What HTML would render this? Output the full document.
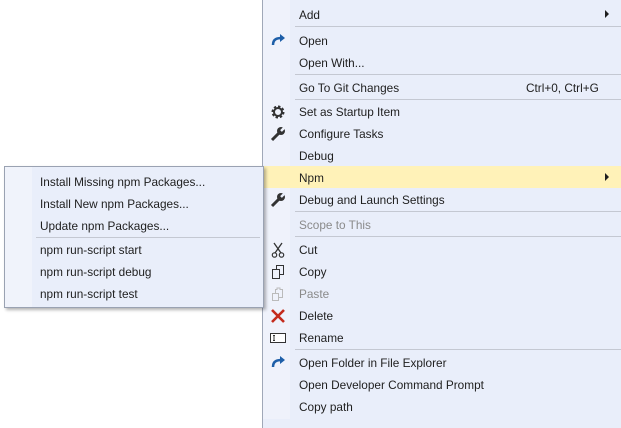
<!DOCTYPE html>
<html><head><style>
body{margin:0;width:621px;height:419px;background:#fff;position:relative;overflow:hidden;font-family:"Segoe UI","Liberation Sans",sans-serif;font-size:11.8px;color:#1e1e1e}
.m{position:absolute;left:262px;top:-2px;width:370px;height:430px;background:#e9eefa;border-left:1px solid #a0a8b8}
.g{position:absolute;left:263px;top:0;width:27px;height:419px;background:#eff2fb}
.r{position:absolute;left:299px;height:22px;line-height:22px;white-space:nowrap;margin-top:1px}
.s{position:absolute;left:295px;width:330px;height:1px;background:#c4c8d2}
.ic{position:absolute;left:270px;width:16px;height:16px;margin-top:1px}
.sub{position:absolute;left:4px;top:166px;width:258px;height:140px;background:#e9eefa;border:1px solid #9aa2b2;box-shadow:2px 2px 3px rgba(0,0,0,.3)}
.sg{position:absolute;left:0;top:0;width:27px;height:140px;background:#f0f3fb}
.sr{position:absolute;left:35px;height:22px;line-height:22px;white-space:nowrap}
.dis{color:#8a8a8a}
</style></head><body>
<div class="m"></div><div class="g"></div>
<div class="r" style="top:3px">Add</div>
<div style="position:absolute;left:605px;top:10px;width:0;height:0;border-left:4px solid #1e1e1e;border-top:4px solid transparent;border-bottom:4px solid transparent"></div>
<div class="s" style="top:26px"></div>
<svg class="ic" style="top:32px" viewBox="0 0 16 16"><path d="M3 12 C3 6 7 5 12 5" stroke="#1e5fa8" stroke-width="2.5" fill="none"/><path d="M10 1 L15 5 L10 9Z" fill="#1e5fa8"/></svg>
<div class="r" style="top:29px">Open</div>
<div class="r" style="top:51px">Open With...</div>
<div class="s" style="top:74px"></div>
<div class="r" style="top:76px">Go To Git Changes</div>
<div class="r" style="top:76px;left:526px">Ctrl+0, Ctrl+G</div>
<div class="s" style="top:99px"></div>
<svg class="ic" style="top:103px" viewBox="0 0 16 16"><circle cx="8" cy="8" r="5" fill="none" stroke="#333" stroke-width="3" stroke-dasharray="2.2 1.7"/><circle cx="8" cy="8" r="4" fill="none" stroke="#333" stroke-width="2"/></svg>
<div class="r" style="top:100px">Set as Startup Item</div>
<svg class="ic" style="top:125px" viewBox="0 0 16 16"><path d="M2 14 L9 7" stroke="#333" stroke-width="3"/><circle cx="11" cy="5" r="4" fill="#333"/><path d="M11 5 L15 1" stroke="#eff2fb" stroke-width="2.5"/></svg>
<div class="r" style="top:122px">Configure Tasks</div>
<div class="r" style="top:144px">Debug</div>
<div style="position:absolute;left:263px;top:166px;width:360px;height:22px;background:#fff2b8"></div>
<div class="r" style="top:166px">Npm</div>
<div style="position:absolute;left:605px;top:173px;width:0;height:0;border-left:4px solid #1e1e1e;border-top:4px solid transparent;border-bottom:4px solid transparent"></div>
<svg class="ic" style="top:191px" viewBox="0 0 16 16"><path d="M2 14 L9 7" stroke="#333" stroke-width="3"/><circle cx="11" cy="5" r="4" fill="#333"/><path d="M11 5 L15 1" stroke="#e9eefa" stroke-width="2.5"/></svg>
<div class="r" style="top:188px">Debug and Launch Settings</div>
<div class="s" style="top:211px"></div>
<div class="r dis" style="top:213px">Scope to This</div>
<div class="s" style="top:236px"></div>
<svg class="ic" style="top:241px" viewBox="0 0 16 16"><path d="M4 1 L11 11 M12 1 L5 11" stroke="#333" stroke-width="1.3"/><circle cx="4.5" cy="13" r="2.2" fill="none" stroke="#333" stroke-width="1.2"/><circle cx="11.5" cy="13" r="2.2" fill="none" stroke="#333" stroke-width="1.2"/></svg>
<div class="r" style="top:238px">Cut</div>
<svg class="ic" style="top:263px" viewBox="0 0 16 16"><rect x="2.5" y="5.5" width="7" height="9" fill="none" stroke="#333"/><path d="M6.5 5.5 V1.5 H13.5 V10.5 H9.5" fill="none" stroke="#333"/></svg>
<div class="r" style="top:260px">Copy</div>
<svg class="ic" style="top:285px" viewBox="0 0 16 16"><rect x="2.5" y="7.5" width="6" height="7" fill="none" stroke="#bbb"/><path d="M5.5 7.5 V3.5 H7 V2 H10 V3.5 H12.5 V11.5 H8.5" fill="none" stroke="#bbb"/></svg>
<div class="r dis" style="top:282px">Paste</div>
<svg class="ic" style="top:307px" viewBox="0 0 16 16"><path d="M2 2 L14 14 M14 2 L2 14" stroke="#c42b1c" stroke-width="2.6"/></svg>
<div class="r" style="top:304px">Delete</div>
<svg class="ic" style="top:329px" viewBox="0 0 16 16"><rect x="0.5" y="3.5" width="15" height="9" fill="#fff" stroke="#333"/><path d="M4 5.5 V10.5 M3 5.5 H5 M3 10.5 H5" stroke="#333"/></svg>
<div class="r" style="top:326px">Rename</div>
<div class="s" style="top:349px"></div>
<svg class="ic" style="top:354px" viewBox="0 0 16 16"><path d="M3 12 C3 6 7 5 12 5" stroke="#1e5fa8" stroke-width="2.5" fill="none"/><path d="M10 1 L15 5 L10 9Z" fill="#1e5fa8"/></svg>
<div class="r" style="top:351px">Open Folder in File Explorer</div>
<div class="r" style="top:373px">Open Developer Command Prompt</div>
<div class="r" style="top:395px">Copy path</div>

<div class="sub"><div class="sg"></div>
<div class="sr" style="top:4px">Install Missing npm Packages...</div>
<div class="sr" style="top:26px">Install New npm Packages...</div>
<div class="sr" style="top:48px">Update npm Packages...</div>
<div style="position:absolute;left:31px;top:70px;width:224px;height:1px;background:#c4c8d2"></div>
<div class="sr" style="top:72px">npm run-script start</div>
<div class="sr" style="top:94px">npm run-script debug</div>
<div class="sr" style="top:116px">npm run-script test</div>
</div>
</body></html>
